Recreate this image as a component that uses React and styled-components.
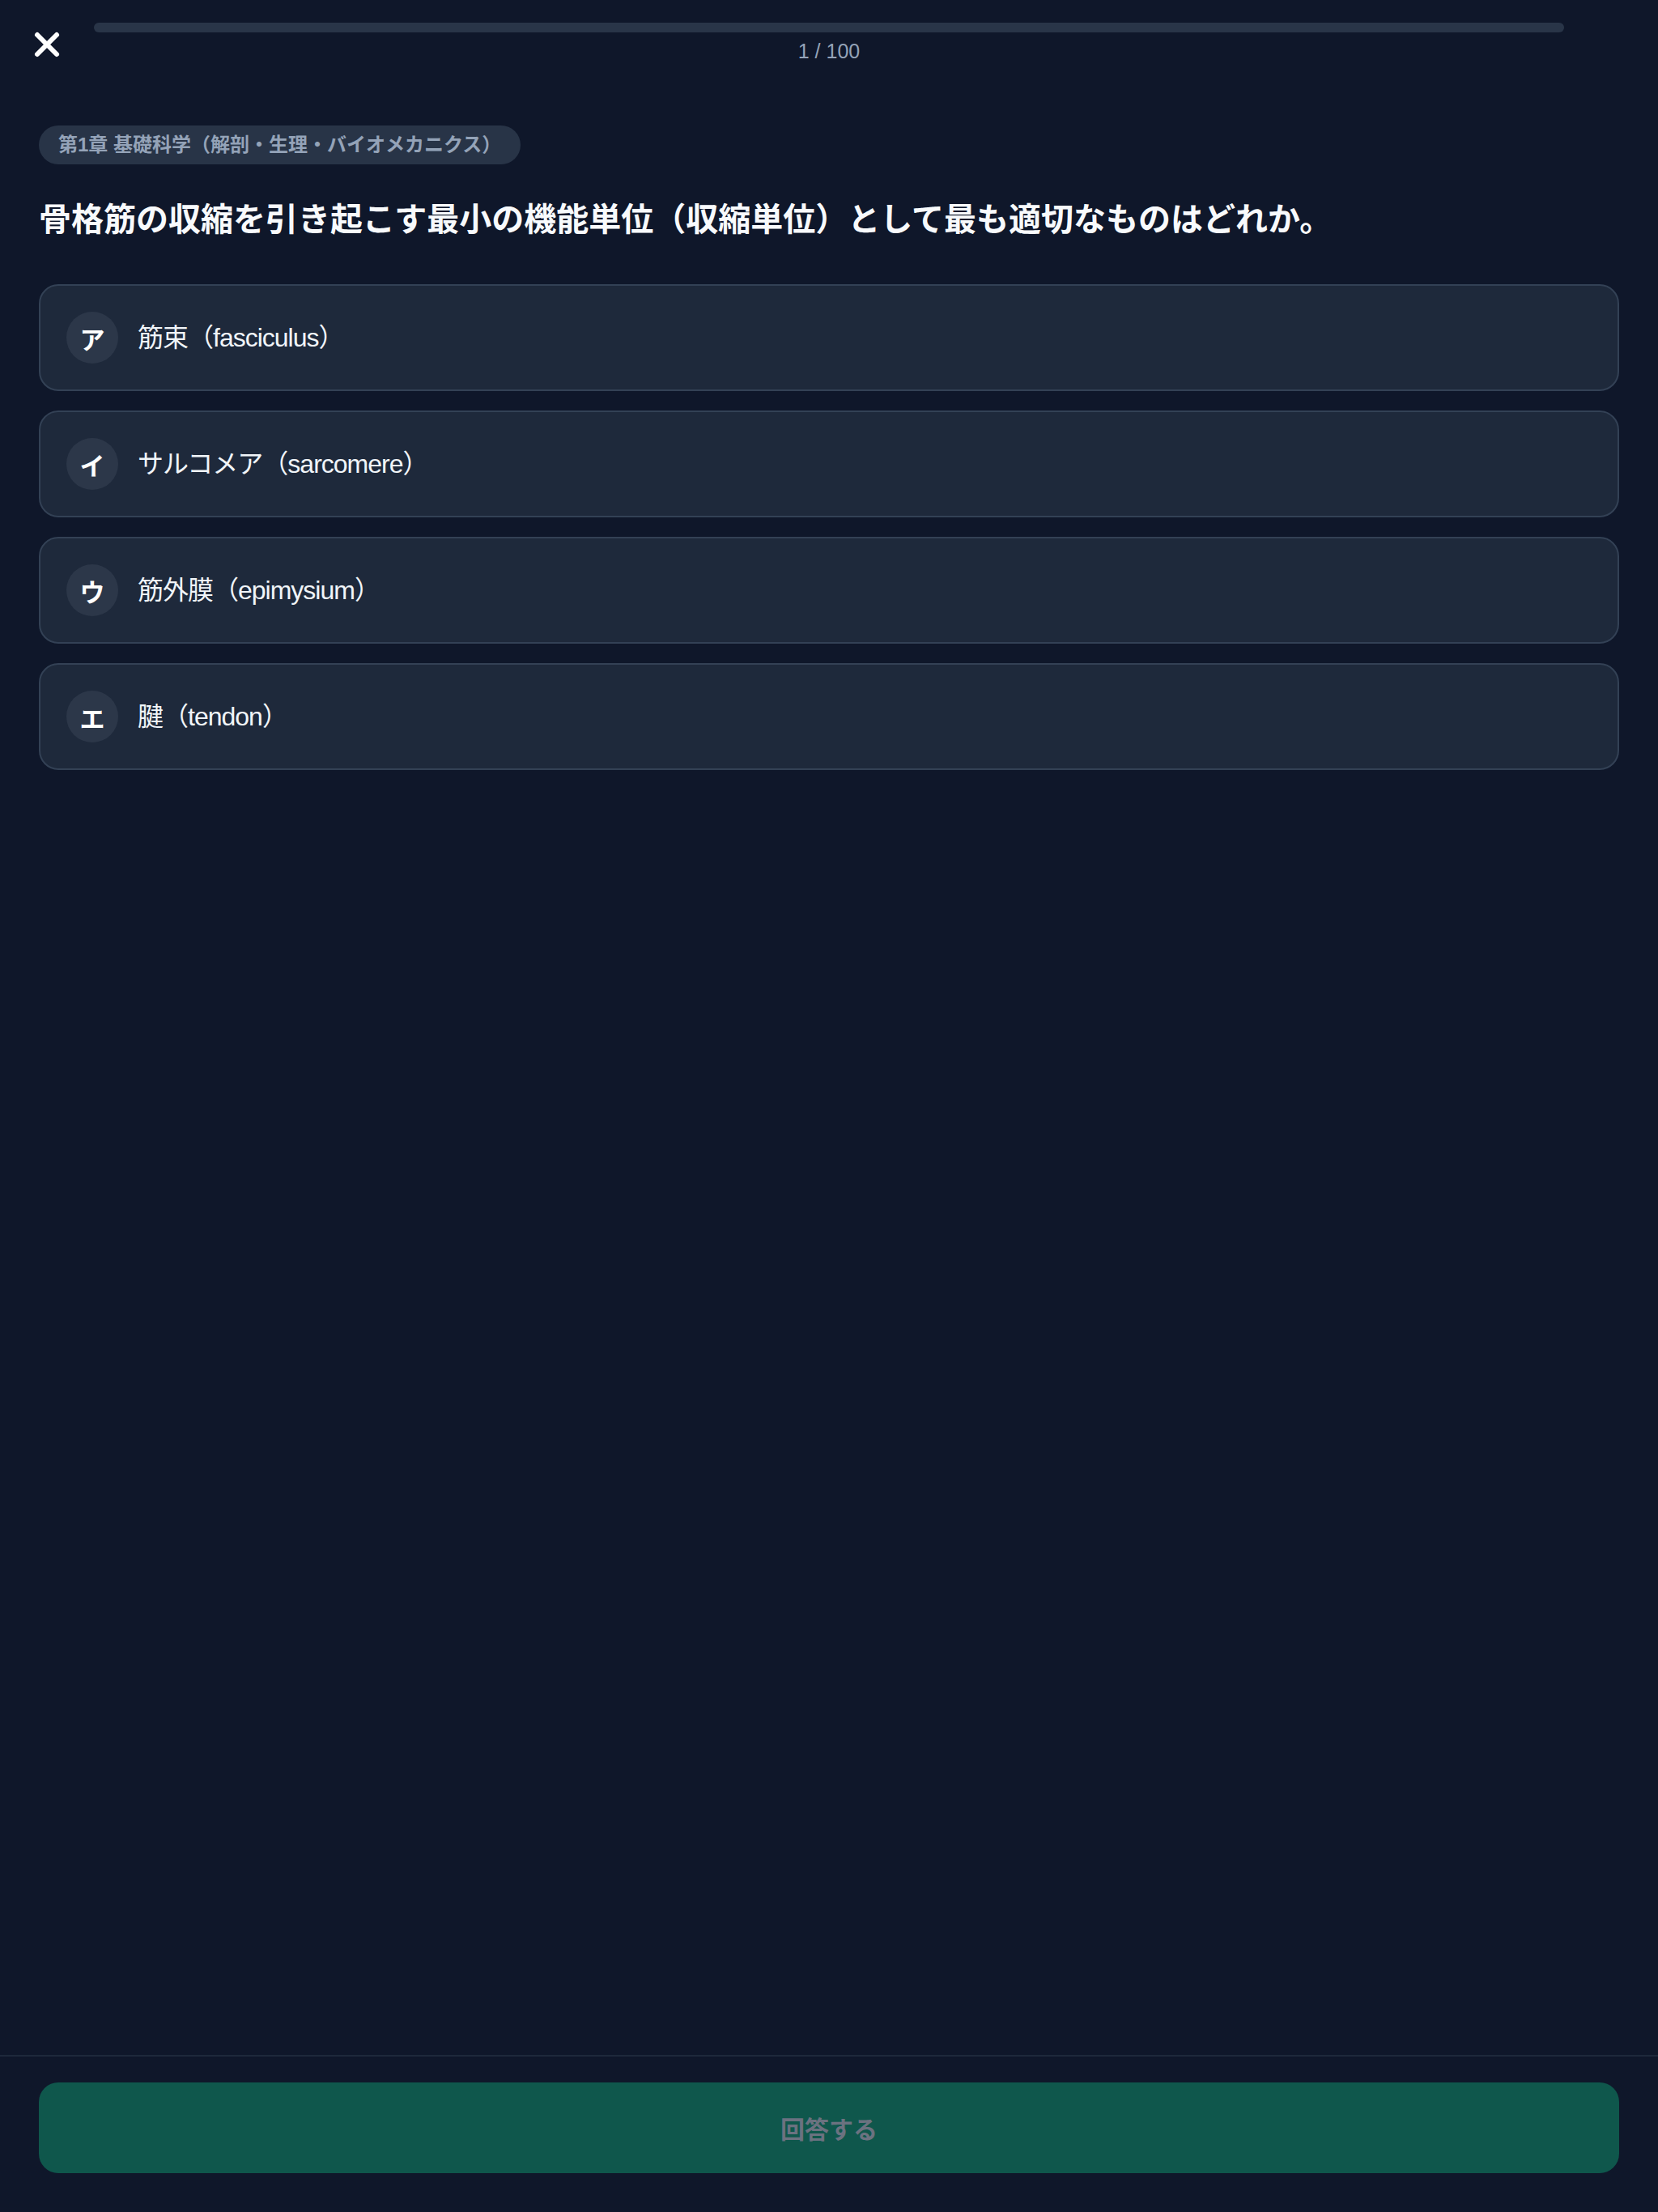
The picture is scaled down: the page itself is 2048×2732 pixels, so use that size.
import React, { useState } from "react";
import styled, { createGlobalStyle } from "styled-components";
import { X } from "lucide-react";

const GlobalStyle = createGlobalStyle`
  html, body {
    margin: 0;
    padding: 0;
    background: #0f172a;
  }
  body {
    font-family: "Liberation Sans", "Noto Sans CJK JP", sans-serif;
    color: #f8fafc;
  }
  * {
    box-sizing: border-box;
  }
`;

const choices = [
  { key: "ア", label: "筋束（fasciculus）" },
  { key: "イ", label: "サルコメア（sarcomere）" },
  { key: "ウ", label: "筋外膜（epimysium）" },
  { key: "エ", label: "腱（tendon）" },
];

const App = () => {
  const [selected, setSelected] = useState(null);
  const current = 1;
  const total = 100;

  return (
    <>
      <GlobalStyle />
      <Page>
        <Header>
          <CloseButton aria-label="閉じる">
            <X size={48} strokeWidth={3} />
          </CloseButton>
          <ProgressColumn>
            <ProgressTrack>
              <ProgressFill style={{ width: `${(current - 1) / total * 100}%` }} />
            </ProgressTrack>
            <Counter>
              {current} / {total}
            </Counter>
          </ProgressColumn>
          <Spacer />
        </Header>

        <Main>
          <ChapterBadge>第1章 基礎科学（解剖・生理・バイオメカニクス）</ChapterBadge>
          <Question>
            骨格筋の収縮を引き起こす最小の機能単位（収縮単位）として最も適切なものはどれか。
          </Question>
          <ChoiceList>
            {choices.map((c) => (
              <Choice
                key={c.key}
                $active={selected === c.key}
                onClick={() => setSelected(c.key)}
              >
                <ChoiceMark>{c.key}</ChoiceMark>
                <ChoiceText>{c.label}</ChoiceText>
              </Choice>
            ))}
          </ChoiceList>
        </Main>

        <Footer>
          <SubmitButton disabled={!selected}>回答する</SubmitButton>
        </Footer>
      </Page>
    </>
  );
};

const Page = styled.div`
  min-height: 100vh;
  display: flex;
  flex-direction: column;
  background: #0f172a;
`;

const Header = styled.header`
  display: flex;
  align-items: center;
  gap: 34px;
  padding: 28px 34px 0;
`;

const CloseButton = styled.button`
  width: 48px;
  height: 48px;
  padding: 0;
  border: none;
  background: none;
  color: #ffffff;
  display: flex;
  align-items: center;
  justify-content: center;
  cursor: pointer;
`;

const Spacer = styled.div`
  width: 48px;
  flex-shrink: 0;
`;

const ProgressColumn = styled.div`
  flex: 1;
  display: flex;
  flex-direction: column;
  align-items: center;
`;

const ProgressTrack = styled.div`
  width: 100%;
  height: 12px;
  border-radius: 6px;
  background: #293548;
  overflow: hidden;
`;

const ProgressFill = styled.div`
  height: 100%;
  background: #10b981;
`;

const Counter = styled.div`
  margin-top: 5px;
  font-size: 25px;
  line-height: 36px;
  color: #94a3b8;
`;

const Main = styled.main`
  flex: 1;
  display: flex;
  flex-direction: column;
  align-items: flex-start;
  padding: 74px 48px 48px;
`;

const ChapterBadge = styled.span`
  display: inline-block;
  padding: 12px 24px;
  border-radius: 999px;
  background: #283447;
  color: #94a3b8;
  font-size: 24px;
  line-height: 24px;
  font-weight: 700;
  margin-bottom: 38px;
`;

const Question = styled.h1`
  margin: 0 0 50px;
  font-size: 40px;
  line-height: 60px;
  font-weight: 700;
  color: #f8fafc;
`;

const ChoiceList = styled.div`
  width: 100%;
  display: flex;
  flex-direction: column;
  gap: 24px;
`;

const Choice = styled.button`
  width: 100%;
  display: flex;
  align-items: center;
  gap: 24px;
  padding: 32px;
  border-radius: 24px;
  border: 2px solid ${(p) => (p.$active ? "#10b981" : "#334155")};
  background: ${(p) => (p.$active ? "#12343a" : "#1e293b")};
  font-family: inherit;
  text-align: left;
  cursor: pointer;
`;

const ChoiceMark = styled.span`
  width: 64px;
  height: 64px;
  flex-shrink: 0;
  border-radius: 50%;
  background: #2c3749;
  color: #ffffff;
  display: flex;
  align-items: center;
  justify-content: center;
  font-size: 31px;
  font-weight: 700;
`;

const ChoiceText = styled.span`
  font-size: 32px;
  line-height: 44px;
  letter-spacing: -1px;
  color: #f1f5f9;
`;

const Footer = styled.footer`
  border-top: 2px solid #1e293b;
  padding: 32px 48px 48px;
`;

const SubmitButton = styled.button`
  width: 100%;
  height: 112px;
  border: none;
  border-radius: 24px;
  background: #0f574c;
  color: #6b7280;
  font-family: inherit;
  font-size: 30px;
  font-weight: 700;
  cursor: pointer;

  &:disabled {
    cursor: default;
  }
`;

export default App;
